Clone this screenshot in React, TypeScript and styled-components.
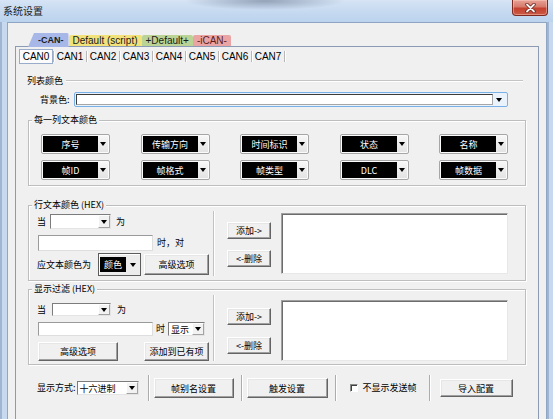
import React from 'react';
import styled, { createGlobalStyle } from 'styled-components';

const CJK = `"Noto Sans CJK SC", "Liberation Sans", sans-serif`;
const LATIN = `"Liberation Sans", "Noto Sans CJK SC", sans-serif`;

const GlobalStyle = createGlobalStyle`
  html, body { margin: 0; padding: 0; }
  body {
    background: #c3d7ee;
    font-family: ${CJK};
    font-size: 9px;
    color: #000;
  }
  * { box-sizing: border-box; }
`;

const Window = styled.div`
  width: 553px;
  height: 419px;
  overflow: hidden;
  display: flex;
  flex-direction: column;
  background: #c3d7ee;
`;

const TitleBar = styled.div`
  flex: none;
  height: 22px;
  display: flex;
  align-items: flex-start;
  padding-left: 3px;
  background:
    radial-gradient(ellipse 80px 9px at 265px 1px, rgba(95, 110, 135, 0.55), rgba(95, 110, 135, 0) 100%),
    linear-gradient(to bottom, #d6e4f5 0%, #c5d9f0 55%, #bcd3ee 100%);
`;

const TitleText = styled.span`
  padding-top: 5px;
  font-size: 10px;
  line-height: 12px;
  color: #1b1b1b;
`;

const CloseButton = styled.div`
  margin-left: auto;
  margin-right: 5px;
  width: 36px;
  height: 16px;
  display: flex;
  align-items: center;
  justify-content: center;
  border: 1px solid #7f2a21;
  border-top: none;
  border-radius: 0 0 4px 4px;
  background: linear-gradient(to bottom, #e6a396 0%, #d77a6c 45%, #c4412f 55%, #cb5a45 100%);
  box-shadow: inset 0 0 0 1px rgba(255, 210, 200, 0.45);
`;

const FrameRow = styled.div`
  flex: 1;
  min-height: 0;
  display: flex;
`;

const SideFrame = styled.div<{ $w: number }>`
  flex: none;
  width: ${p => p.$w}px;
  background: linear-gradient(to right, #9fb5d2 0, #9fb5d2 2px, #c6d9ef 2px);
`;

const Client = styled.div`
  flex: 1;
  min-width: 0;
  display: flex;
  flex-direction: column;
  overflow: hidden;
  padding: 10px 7px 0;
  background: #f0f0f0;
  border: 1px solid #8ea5c3;
  border-bottom: none;
`;

const OuterTabs = styled.div`
  flex: none;
  height: 13px;
  display: flex;
  align-items: flex-end;
  padding-left: 13px;
`;

const ColorTab = styled.div<{ $bg: string; $active?: boolean; $fg?: string }>`
  position: relative;
  z-index: ${p => (p.$active ? 1 : 0)};
  height: ${p => (p.$active ? 14 : 11)}px;
  margin-bottom: ${p => (p.$active ? -1 : 0)}px;
  padding: 0 ${p => (p.$active ? 5 : 4)}px 0 ${p => (p.$active ? 10 : 4)}px;
  display: flex;
  align-items: center;
  background: ${p => p.$bg};
  color: ${p => p.$fg || '#1a1a1a'};
  font-family: ${LATIN};
  font-size: ${p => (p.$active ? 9 : 10)}px;
  font-weight: ${p => (p.$active ? 'bold' : 'normal')};
  white-space: nowrap;
  border-radius: 2px 2px 0 0;
  clip-path: ${p => (p.$active ? 'polygon(6px 0, 100% 0, 100% 100%, 0 100%)' : 'none')};
`;

const Pane = styled.div`
  flex: none;
  height: 400px;
  display: flex;
  flex-direction: column;
  border: 1px solid #8c9bb5;
  background: #f0f0f0;
`;

const CanTabs = styled.div`
  height: 15px;
  margin-top: 2px;
  padding-left: 3px;
  display: flex;
  align-items: center;
`;

const CanTab = styled.div<{ $active?: boolean }>`
  width: ${p => (p.$active ? 34 : 32)}px;
  height: 15px;
  display: flex;
  align-items: center;
  justify-content: center;
  font-family: ${LATIN};
  font-size: 10px;
  border: 1px solid ${p => (p.$active ? '#9aaccb' : 'transparent')};
  background: ${p => (p.$active ? '#fbfbfb' : 'transparent')};
`;

const CanSep = styled.span`
  width: 1px;
  height: 11px;
  background: #b8b8b8;
  box-shadow: 1px 0 0 #fff;
`;

const Content = styled.div`
  display: flex;
  flex-direction: column;
  padding: 0 12px;
`;

const SectionHeader = styled.div`
  margin-top: 11px;
  height: 12px;
  display: flex;
  align-items: center;
`;

const SectionLabel = styled.span`
  margin-left: -1px;
  line-height: 12px;
`;

const SectionRule = styled.span`
  flex: 1;
  margin: 0 3px;
  border-top: 1px solid #c4c4c4;
  border-bottom: 1px solid #fff;
`;

const BgRow = styled.div`
  margin-top: 5px;
  height: 15px;
  display: flex;
  align-items: center;
  padding-left: 12px;
`;

const BgCombo = styled.div`
  margin-left: 4px;
  width: 434px;
  height: 15px;
  display: flex;
  padding: 1px;
  border: 1px solid #79b0e8;
  border-radius: 2px;
  background: #eaf3fc;
`;

const BgField = styled.span`
  flex: 1;
  background: #fff;
  border: 1px solid;
  border-color: #3c3c3c #a6a6a6 #a6a6a6 #3c3c3c;
`;

const BgDrop = styled.span`
  width: 13px;
  display: flex;
  align-items: center;
  justify-content: center;
`;

const Caret = styled.span`
  width: 0;
  height: 0;
  border-left: 3.5px solid transparent;
  border-right: 3.5px solid transparent;
  border-top: 4px solid #000;
`;

const Group = styled.div<{ $mt: number }>`
  margin-top: ${p => p.$mt}px;
  display: flex;
  flex-direction: column;
  border: 1px solid #bdbdbd;
  box-shadow: inset 1px 1px 0 #fff, 1px 1px 0 #fff;
`;

const GroupTitle = styled.span`
  align-self: flex-start;
  height: 12px;
  margin: -7px 0 0 3px;
  padding: 0 2px;
  line-height: 12px;
  background: #f0f0f0;
  white-space: nowrap;
`;

const PickerGrid = styled.div`
  margin-top: 8px;
  padding: 0 0 5px 12px;
  display: grid;
  grid-template-columns: repeat(5, 69px);
  grid-auto-rows: 20px;
  column-gap: 30.5px;
  row-gap: 6px;
`;

const Picker = styled.div<{ $w: number; $h: number; $inset: number; $classic?: boolean; $ml?: number }>`
  flex: none;
  width: ${p => p.$w}px;
  height: ${p => p.$h}px;
  margin-left: ${p => p.$ml || 0}px;
  display: flex;
  align-items: stretch;
  padding: ${p => p.$inset}px 1px;
  border: 1px solid ${p => (p.$classic ? '#5c5c5c' : '#a6a6a6')};
  border-radius: ${p => (p.$classic ? 0 : 2)}px;
  background: ${p => (p.$classic ? '#ececec' : 'linear-gradient(#f8f8f8, #e2e2e2)')};
  box-shadow: ${p => (p.$classic ? 'inset 1px 1px 0 #fff' : 'inset 0 0 0 1px #fbfbfb')};
`;

const Swatch = styled.span<{ $w: number }>`
  width: ${p => p.$w}px;
  display: flex;
  align-items: center;
  justify-content: center;
  background: #000;
  color: #fff;
  font-size: 9px;
  line-height: 1;
  white-space: nowrap;
`;

const CaretBox = styled.span`
  flex: 1;
  display: flex;
  align-items: center;
  justify-content: center;
`;

const GroupBody = styled.div<{ $pb: number }>`
  display: flex;
  padding-bottom: ${p => p.$pb}px;
`;

const LeftPart = styled.div`
  width: 185px;
  display: flex;
  flex-direction: column;
  padding-left: 8px;
  border-right: 1px solid #c2c2c2;
  box-shadow: 1px 0 0 #fff;
`;

const Row = styled.div<{ $h: number; $mt: number }>`
  height: ${p => p.$h}px;
  margin-top: ${p => p.$mt}px;
  display: flex;
  align-items: center;
  white-space: nowrap;
`;

const Text = styled.span<{ $ml?: number }>`
  margin-left: ${p => p.$ml || 0}px;
  line-height: 12px;
  white-space: nowrap;
`;

const Combo = styled.div<{ $w: number; $h: number; $ml?: number }>`
  flex: none;
  width: ${p => p.$w}px;
  height: ${p => p.$h}px;
  margin-left: ${p => p.$ml || 0}px;
  display: flex;
  background: #fff;
  border: 1px solid;
  border-color: #7c7c7c #e4e4e4 #e4e4e4 #7c7c7c;
`;

const ComboValue = styled.span`
  flex: 1;
  display: flex;
  align-items: center;
  padding-left: 2px;
  font-size: 9px;
  line-height: 1;
  white-space: nowrap;
  overflow: hidden;
`;

const ComboDrop = styled.span`
  flex: none;
  width: 12px;
  display: flex;
  align-items: center;
  justify-content: center;
  background: #f2f2f2;
  border: 1px solid;
  border-color: #fff #a3a3a3 #a3a3a3 #fff;
`;

const Field = styled.input<{ $w: number; $h: number; $ml?: number }>`
  flex: none;
  width: ${p => p.$w}px;
  height: ${p => p.$h}px;
  margin: 0 0 0 ${p => p.$ml || 0}px;
  padding: 0;
  outline: none;
  background: #fff;
  border: 1px solid;
  border-color: #9a9a9a #dedede #dedede #9a9a9a;
`;

const PushButton = styled.button<{ $w: number; $h: number; $ml?: number }>`
  flex: none;
  width: ${p => p.$w}px;
  height: ${p => p.$h}px;
  margin: 0 0 0 ${p => p.$ml || 0}px;
  padding: 0;
  background: #f0f0f0;
  border: 1px solid;
  border-color: #fff #646464 #646464 #fff;
  box-shadow: inset -1px -1px 0 #a0a0a0, inset 1px 1px 0 #e6e6e6;
  font-family: ${CJK};
  font-size: 9px;
  line-height: 1;
  color: #000;
  white-space: nowrap;
`;

const RightPart = styled.div`
  flex: 1;
  display: flex;
  align-items: flex-start;
  padding-left: 13px;
`;

const ButtonStack = styled.div<{ $pt: number; $gap: number }>`
  display: flex;
  flex-direction: column;
  padding-top: ${p => p.$pt}px;
  gap: ${p => p.$gap}px;
`;

const ListBox = styled.div<{ $mt: number }>`
  margin: ${p => p.$mt}px 0 0 10px;
  width: 227px;
  height: 61px;
  background: #fff;
  border: 1px solid;
  border-color: #a0a0a0 #e8e8e8 #e8e8e8 #a0a0a0;
  box-shadow: inset 1px 1px 0 #6c6c6c;
`;

const BottomRow = styled.div`
  margin-top: 10px;
  height: 26px;
  display: flex;
  align-items: center;
  padding-left: 9px;
`;

const VSep = styled.span<{ $ml: number }>`
  flex: none;
  height: 26px;
  margin-left: ${p => p.$ml}px;
  border-left: 1px solid #acacac;
  border-right: 1px solid #fff;
`;

const CheckBox = styled.span<{ $ml: number }>`
  flex: none;
  width: 8px;
  height: 8px;
  margin-left: ${p => p.$ml}px;
  background: #fff;
  border: 1px solid;
  border-color: #8a8a8a #fff #fff #8a8a8a;
  box-shadow: inset 1px 1px 0 #404040;
`;

const ComboBox: React.FC<{ w: number; h: number; ml?: number; value?: string }> = ({ w, h, ml, value }) => (
  <Combo $w={w} $h={h} $ml={ml}>
    <ComboValue>{value}</ComboValue>
    <ComboDrop><Caret /></ComboDrop>
  </Combo>
);

const columnColors = ['序号', '传输方向', '时间标识', '状态', '名称', '帧ID', '帧格式', '帧类型', 'DLC', '帧数据'];
const canTabs = ['CAN0', 'CAN1', 'CAN2', 'CAN3', 'CAN4', 'CAN5', 'CAN6', 'CAN7'];

const App: React.FC = () => {
  return (
    <>
      <GlobalStyle />
      <Window>
        <TitleBar>
          <TitleText>系统设置</TitleText>
          <CloseButton>
            <svg width="11" height="10" viewBox="0 0 11 10">
              <path d="M2 1.5 L9 8.5 M9 1.5 L2 8.5" stroke="#6a2219" strokeWidth="3.4" strokeLinecap="round" />
              <path d="M2 1.5 L9 8.5 M9 1.5 L2 8.5" stroke="#f4f4f4" strokeWidth="1.8" strokeLinecap="round" />
            </svg>
          </CloseButton>
        </TitleBar>
        <FrameRow>
          <SideFrame $w={7} />
          <Client>
            <OuterTabs>
              <ColorTab $bg="#a7b7e8" $active>-CAN-</ColorTab>
              <ColorTab $bg="#f1e27c">Default (script)</ColorTab>
              <ColorTab $bg="#bcd396">+Default+</ColorTab>
              <ColorTab $bg="#eba4a4" $fg="#5a1d1d">-iCAN-</ColorTab>
            </OuterTabs>
            <Pane>
              <CanTabs>
                {canTabs.map((t, i) => (
                  <React.Fragment key={t}>
                    <CanTab $active={i === 0}>{t}</CanTab>
                    <CanSep />
                  </React.Fragment>
                ))}
              </CanTabs>
              <Content>
                <SectionHeader>
                  <SectionLabel>列表颜色</SectionLabel>
                  <SectionRule />
                </SectionHeader>
                <BgRow>
                  <Text>背景色:</Text>
                  <BgCombo>
                    <BgField />
                    <BgDrop><Caret /></BgDrop>
                  </BgCombo>
                </BgRow>

                <Group $mt={13}>
                  <GroupTitle>每一列文本颜色</GroupTitle>
                  <PickerGrid>
                    {columnColors.map(c => (
                      <Picker key={c} $w={69} $h={20} $inset={1}>
                        <Swatch $w={55}>{c}</Swatch>
                        <CaretBox><Caret /></CaretBox>
                      </Picker>
                    ))}
                  </PickerGrid>
                </Group>

                <Group $mt={19}>
                  <GroupTitle>行文本颜色 (HEX)</GroupTitle>
                  <GroupBody $pb={4}>
                    <LeftPart>
                      <Row $h={15} $mt={3}>
                        <Text>当</Text>
                        <ComboBox w={61} h={15} ml={4} />
                        <Text $ml={5}>为</Text>
                      </Row>
                      <Row $h={16} $mt={6}>
                        <Field $w={115} $h={16} $ml={1} readOnly />
                        <Text $ml={4}>时，对</Text>
                      </Row>
                      <Row $h={23} $mt={2}>
                        <Text>应文本颜色为</Text>
                        <Picker $w={43} $h={23} $inset={3} $classic $ml={7}>
                          <Swatch $w={26}>颜色</Swatch>
                          <CaretBox><Caret /></CaretBox>
                        </Picker>
                        <PushButton $w={65} $h={21} $ml={3}>高级选项</PushButton>
                      </Row>
                    </LeftPart>
                    <RightPart>
                      <ButtonStack $pt={11} $gap={11}>
                        <PushButton $w={44} $h={17}>添加-&gt;</PushButton>
                        <PushButton $w={44} $h={17}>&lt;-删除</PushButton>
                      </ButtonStack>
                      <ListBox $mt={2} />
                    </RightPart>
                  </GroupBody>
                </Group>

                <Group $mt={8}>
                  <GroupTitle>显示过滤 (HEX)</GroupTitle>
                  <GroupBody $pb={3}>
                    <LeftPart>
                      <Row $h={13} $mt={8}>
                        <Text>当</Text>
                        <ComboBox w={59} h={13} ml={6} />
                        <Text $ml={6}>为</Text>
                      </Row>
                      <Row $h={14} $mt={6}>
                        <Field $w={115} $h={14} $ml={1} readOnly />
                        <Text $ml={3}>时</Text>
                        <ComboBox w={37} h={14} ml={3} value="显示" />
                      </Row>
                      <Row $h={19} $mt={6}>
                        <PushButton $w={80} $h={19} $ml={1}>高级选项</PushButton>
                        <PushButton $w={65} $h={19} $ml={26}>添加到已有项</PushButton>
                      </Row>
                    </LeftPart>
                    <RightPart>
                      <ButtonStack $pt={13} $gap={12}>
                        <PushButton $w={44} $h={17}>添加-&gt;</PushButton>
                        <PushButton $w={44} $h={17}>&lt;-删除</PushButton>
                      </ButtonStack>
                      <ListBox $mt={5} />
                    </RightPart>
                  </GroupBody>
                </Group>

                <BottomRow>
                  <Text>显示方式:</Text>
                  <ComboBox w={62} h={14} ml={1} value="十六进制" />
                  <VSep $ml={9} />
                  <PushButton $w={80} $h={20} $ml={4}>帧别名设置</PushButton>
                  <VSep $ml={7} />
                  <PushButton $w={81} $h={20} $ml={4}>触发设置</PushButton>
                  <VSep $ml={7} />
                  <CheckBox $ml={13} />
                  <Text $ml={5}>不显示发送帧</Text>
                  <VSep $ml={12} />
                  <PushButton $w={73} $h={18} $ml={9}>导入配置</PushButton>
                </BottomRow>
              </Content>
            </Pane>
          </Client>
          <SideFrame $w={6} />
        </FrameRow>
      </Window>
    </>
  );
};

export default App;
